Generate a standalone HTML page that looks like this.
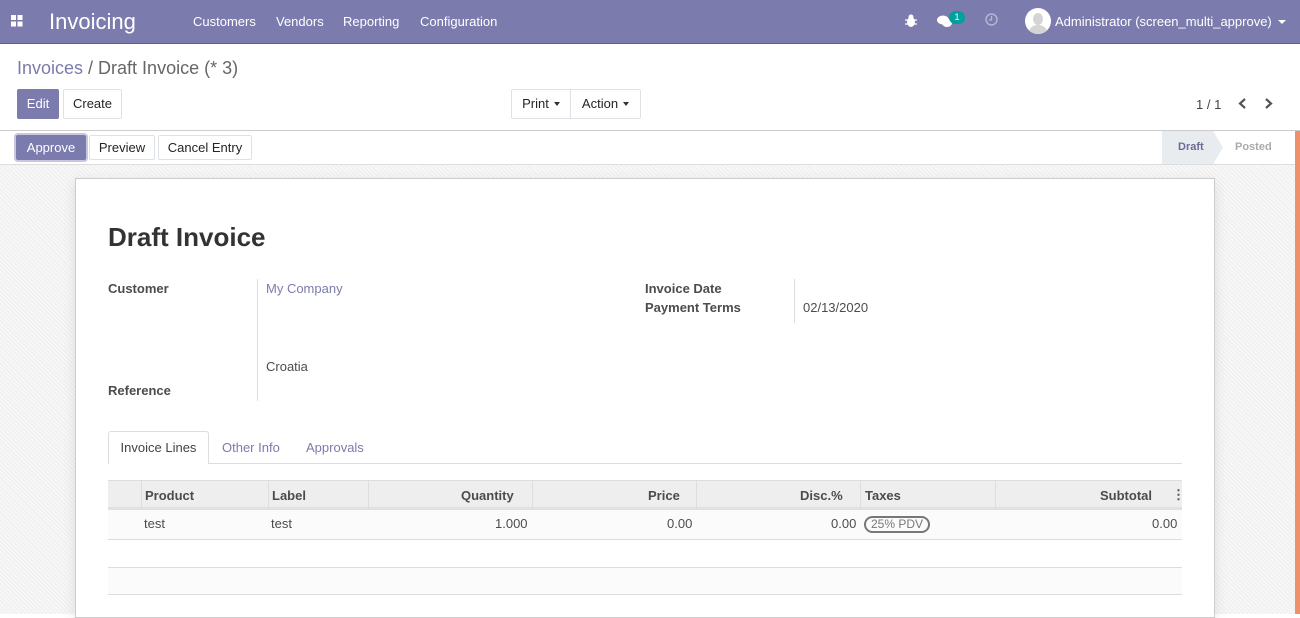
<!DOCTYPE html>
<html><head><meta charset="utf-8"><style>
*{box-sizing:border-box;margin:0;padding:0}
body{width:1300px;height:614px;overflow:hidden;font-family:"Liberation Sans",sans-serif;font-size:13px;color:#4c4c4c;background:#fff;position:relative}
.a{position:absolute}
.nav{left:0;top:0;width:1300px;height:44px;background:#7c7bad;border-bottom:1px solid #5e5d8a;color:#fff}
.nav span{position:absolute;font-size:13px;top:14px}
.btn{position:absolute;height:30px;border:1px solid #dee2e6;border-radius:2px;background:#fff;font-size:13px;line-height:28px;text-align:center;color:#212529}
.pri{background:#7c7bad;border-color:#7c7bad;color:#fff}
.lbl{font-weight:bold;color:#4c4c4c}
.car{display:inline-block;width:0;height:0;border:3.5px solid transparent;border-top:4px solid #333;border-bottom:0;vertical-align:middle;margin-left:5px;margin-top:-2px}
</style></head><body>
<div class="a nav">
<svg class="a" style="left:11px;top:15px" width="12" height="12"><rect x="0" y="0" width="5" height="5" fill="#fff"/><rect x="6.5" y="0" width="5" height="5" fill="#fff"/><rect x="0" y="6.5" width="5" height="5" fill="#fff"/><rect x="6.5" y="6.5" width="5" height="5" fill="#fff"/></svg>
<span style="left:49px;top:9px;font-size:22px">Invoicing</span>
<span style="left:193px">Customers</span><span style="left:276px">Vendors</span><span style="left:343px">Reporting</span><span style="left:420px">Configuration</span>
<svg class="a" style="left:905px;top:14px" width="12" height="13"><ellipse cx="6" cy="8" rx="4" ry="5" fill="#fff"/><circle cx="6" cy="3" r="2.5" fill="#fff"/><path d="M0 6h12M0 10h12" stroke="#fff" stroke-width="1.3"/></svg>
<svg class="a" style="left:937px;top:15px" width="16" height="13"><ellipse cx="6" cy="5" rx="6" ry="4.5" fill="#fff"/><ellipse cx="10" cy="8" rx="5" ry="4" fill="#fff"/></svg>
<div class="a" style="left:949px;top:11px;width:16px;height:13px;border-radius:7px;background:#00a09d;color:#fff;font-size:9px;text-align:center;line-height:13px">1</div>
<svg class="a" style="left:985px;top:13px" width="13" height="13"><circle cx="6.5" cy="6.5" r="5.5" stroke="#b6b5d2" stroke-width="1.5" fill="none"/><path d="M6.5 3v4H4" stroke="#b6b5d2" stroke-width="1.3" fill="none"/></svg>
<div class="a" style="left:1025px;top:8px;width:26px;height:26px;border-radius:50%;background:#fff;overflow:hidden"><div class="a" style="left:8px;top:5px;width:10px;height:12px;border-radius:50%;background:#d4d4d4"></div><div class="a" style="left:4px;top:17px;width:18px;height:14px;border-radius:50%;background:#d4d4d4"></div></div>
<span style="left:1055px">Administrator (screen_multi_approve)</span>
<div class="a" style="left:1278px;top:20px;border:4px solid transparent;border-top-color:#fff;border-bottom:0"></div>
</div>
<div class="a" style="left:17px;top:58px;font-size:18px;color:#7c7bad">Invoices <span style="color:#666">/ Draft Invoice (* 3)</span></div>
<div class="btn pri" style="left:17px;top:89px;width:42px">Edit</div>
<div class="btn" style="left:63px;top:89px;width:59px">Create</div>
<div class="btn" style="left:511px;top:89px;width:60px;border-radius:2px 0 0 2px">Print<span class="car"></span></div>
<div class="btn" style="left:570px;top:89px;width:71px;border-radius:0 2px 2px 0">Action<span class="car"></span></div>
<div class="a" style="left:1196px;top:97px;font-size:13px;color:#444">1 / 1</div>
<svg class="a" style="left:1236px;top:97px" width="40" height="13"><path d="M9 2L4 6.5 9 11" stroke="#555" stroke-width="2.2" fill="none"/><path d="M30 2l5 4.5-5 4.5" stroke="#555" stroke-width="2.2" fill="none"/></svg>
<div class="a" style="left:0;top:130px;width:1300px;height:1px;background:#ccc"></div>
<div class="a" style="left:0;top:131px;width:1295px;height:34px;background:#fff;border-bottom:1px solid #ddd"></div>
<div class="btn pri" style="left:16px;top:135px;width:70px;height:25px;line-height:23px;box-shadow:0 0 0 2px #c8c7df">Approve</div>
<div class="btn" style="left:89px;top:135px;width:66px;height:25px;line-height:23px">Preview</div>
<div class="btn" style="left:158px;top:135px;width:94px;height:25px;line-height:23px">Cancel Entry</div>
<div class="a" style="left:1162px;top:131px;width:52px;height:33px;background:#e9ecef"></div>
<svg class="a" style="left:1213px;top:131px" width="12" height="33"><path d="M0 0L10 16.5 0 33Z" fill="#e9ecef"/></svg>
<div class="a" style="left:1178px;top:141px;font-size:11px;font-weight:bold;color:#6c6b95">Draft</div>
<div class="a" style="left:1235px;top:141px;font-size:11px;font-weight:bold;color:#aaa">Posted</div>
<div class="a" style="left:1295px;top:131px;width:5px;height:483px;background:#f0906a"></div>
<div class="a" style="left:0;top:165px;width:1295px;height:449px;background:#f3f3f3;background-image:repeating-linear-gradient(45deg,#eee 0 1px,#f7f7f7 1px 3px)"></div>
<div class="a" style="left:75px;top:178px;width:1140px;height:440px;background:#fff;border:1px solid #ccc;box-shadow:0 4px 12px rgba(0,0,0,.1)"></div>
<div class="a" style="left:108px;top:222px;font-size:26px;font-weight:bold;color:#333">Draft Invoice</div>
<div class="a lbl" style="left:108px;top:281px">Customer</div>
<div class="a" style="left:257px;top:279px;width:1px;height:122px;background:#ddd"></div>
<div class="a" style="left:266px;top:281px;color:#7c7bad">My Company</div>
<div class="a" style="left:266px;top:359px">Croatia</div>
<div class="a lbl" style="left:108px;top:383px">Reference</div>
<div class="a lbl" style="left:645px;top:281px">Invoice Date</div>
<div class="a lbl" style="left:645px;top:300px">Payment Terms</div>
<div class="a" style="left:794px;top:279px;width:1px;height:44px;background:#ddd"></div>
<div class="a" style="left:803px;top:300px">02/13/2020</div>
<div class="a" style="left:108px;top:463px;width:1074px;height:1px;background:#ddd"></div>
<div class="a" style="left:108px;top:431px;width:101px;height:33px;background:#fff;border:1px solid #ddd;border-bottom:0;border-radius:3px 3px 0 0;text-align:center;line-height:32px;color:#444">Invoice Lines</div>
<div class="a" style="left:222px;top:440px;color:#7c7bad">Other Info</div>
<div class="a" style="left:306px;top:440px;color:#7c7bad">Approvals</div>
<div class="a" style="left:108px;top:480px;width:1074px;height:30px;background:#eee;border-top:1px solid #ddd;border-bottom:3px solid #dee2e6"></div>
<div class="a" style="left:141px;top:481px;width:1px;height:28px;background:#ddd"></div>
<div class="a" style="left:268px;top:481px;width:1px;height:28px;background:#ddd"></div>
<div class="a" style="left:368px;top:481px;width:1px;height:28px;background:#ddd"></div>
<div class="a" style="left:532px;top:481px;width:1px;height:28px;background:#ddd"></div>
<div class="a" style="left:696px;top:481px;width:1px;height:28px;background:#ddd"></div>
<div class="a" style="left:860px;top:481px;width:1px;height:28px;background:#ddd"></div>
<div class="a" style="left:995px;top:481px;width:1px;height:28px;background:#ddd"></div>
<div class="a lbl" style="left:145px;top:488px">Product</div>
<div class="a lbl" style="left:272px;top:488px">Label</div>
<div class="a lbl" style="left:461px;top:488px">Quantity</div>
<div class="a lbl" style="left:648px;top:488px">Price</div>
<div class="a lbl" style="left:800px;top:488px">Disc.%</div>
<div class="a lbl" style="left:865px;top:488px">Taxes</div>
<div class="a lbl" style="left:1100px;top:488px">Subtotal</div>
<div class="a lbl" style="left:1172px;top:487px">⋮</div>
<div class="a" style="left:108px;top:510px;width:1074px;height:30px;background:#fbfbfb;border-bottom:1px solid #ddd"></div>
<div class="a" style="left:144px;top:516px">test</div>
<div class="a" style="left:271px;top:516px">test</div>
<div class="a" style="left:495px;top:516px">1.000</div>
<div class="a" style="left:667px;top:516px">0.00</div>
<div class="a" style="left:831px;top:516px">0.00</div>
<div class="a" style="left:864px;top:516px;width:66px;height:17px;border:2px solid #777;border-radius:9px;font-size:12px;line-height:13px;text-align:center;color:#777">25% PDV</div>
<div class="a" style="left:1152px;top:516px">0.00</div>
<div class="a" style="left:108px;top:567px;width:1074px;height:28px;background:#fbfbfb;border-top:1px solid #ddd;border-bottom:1px solid #ddd"></div>
</body></html>
